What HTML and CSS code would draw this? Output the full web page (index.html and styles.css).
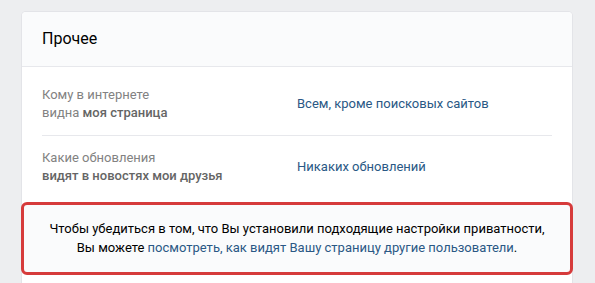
FILE: index.html
```html
<!DOCTYPE html>
<html lang="ru">
<head>
    <meta charset="UTF-8">
    <meta name="viewport" content="width=device-width, initial-scale=1.0">
    <title>Настройки приватности</title>
    <link rel="stylesheet" href="styles.css">
</head>
<body>

<div class="card">
    <div class="card-header">Прочее</div>

    <div class="rows">
        <div class="row">
            <div class="label">Кому в интернете<br>видна <b>моя страница</b></div>
            <a class="value" href="#">Всем, кроме поисковых сайтов</a>
        </div>
        <div class="row">
            <div class="label">Какие обновления<br><b>видят в новостях мои друзья</b></div>
            <a class="value" href="#">Никаких обновлений</a>
        </div>
    </div>

    <!-- Privacy check hint -->
    <div class="privacy-note">
        Чтобы убедиться в том, что Вы установили подходящие настройки приватности,<br>
        Вы можете <a href="#">посмотреть, как видят Вашу страницу другие пользователи</a>.
    </div>
</div>

</body>
</html>
```

FILE: styles.css
```css
body {
    font-family: Roboto, "Open Sans", Arial, sans-serif;
    font-size: 13px;
    line-height: 18px;
    margin: 0;
    padding: 12px 23px 0 22px;
    background-color: #edeef0;
    color: #000;
}

a {
    color: #2a5885;
    text-decoration: none;
}

.card {
    background-color: #fff;
    border-radius: 4px 4px 0 0;
    box-shadow: 0 0 0 1px #e3e4e8;
    padding-bottom: 12px;
}

.card-header {
    background-color: #fafbfc;
    border-radius: 4px 4px 0 0;
    border-bottom: 1px solid #e7e8ec;
    height: 54px;
    line-height: 54px;
    padding: 0 20px;
    font-size: 16px;
}

.rows {
    padding: 6px 20px 0;
}

.row {
    display: grid;
    grid-template-columns: 255px 1fr;
    align-items: center;
    padding: 13px 0;
    border-bottom: 1px solid #e7e8ec;
}

.row:last-child {
    border-bottom: none;
}

.label {
    color: #828282;
}

.label b {
    color: #656565;
    font-weight: 500;
}

.privacy-note {
    margin: 4px -1px 0;
    padding: 14px 20px 15px;
    border: 3px solid #d63b3b;
    border-radius: 6px;
    background-color: #fafbfc;
    text-align: center;
    line-height: 19px;
}
```
